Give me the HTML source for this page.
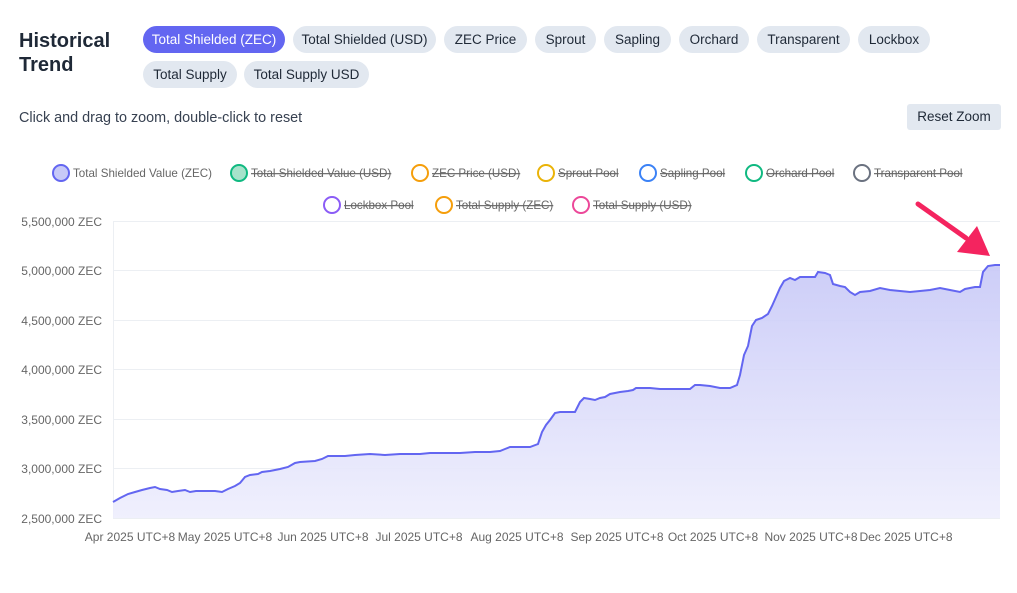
<!DOCTYPE html><html><head><style>
body{margin:0;width:1017px;height:593px;background:#fff;font-family:"Liberation Sans",sans-serif;position:relative;overflow:hidden;color:#1f2937}
.t{position:absolute;left:19px;top:29px;font-size:20px;font-weight:bold;line-height:24px;color:#1f2937}
.b{position:absolute;height:27px;line-height:27px;border-radius:14px;background:#e2e8f0;font-size:13.5px;text-align:center;color:#1f2937;white-space:nowrap}
.a{background:#6366f1;color:#fff}
.h{position:absolute;left:19px;top:110px;font-size:14.4px;color:#374151}
.r{position:absolute;left:907px;top:104px;width:94px;height:26px;line-height:26px;text-align:center;background:#e2e8f0;border-radius:3px;font-size:13.5px}
svg text{font-family:"Liberation Sans",sans-serif}
</style></head><body>
<div class="t">Historical<br>Trend</div>
<div class="b a" style="left:143px;top:26px;width:142px">Total Shielded (ZEC)</div>
<div class="b" style="left:293px;top:26px;width:143px">Total Shielded (USD)</div>
<div class="b" style="left:444px;top:26px;width:83px">ZEC Price</div>
<div class="b" style="left:535px;top:26px;width:61px">Sprout</div>
<div class="b" style="left:604px;top:26px;width:67px">Sapling</div>
<div class="b" style="left:679px;top:26px;width:70px">Orchard</div>
<div class="b" style="left:757px;top:26px;width:93px">Transparent</div>
<div class="b" style="left:858px;top:26px;width:72px">Lockbox</div>
<div class="b" style="left:143px;top:61px;width:94px">Total Supply</div>
<div class="b" style="left:244px;top:61px;width:125px">Total Supply USD</div>
<div class="h">Click and drag to zoom, double-click to reset</div>
<div class="r">Reset Zoom</div>
<svg width="1017" height="593" style="position:absolute;left:0;top:0">
<defs><linearGradient id="g" x1="0" y1="0" x2="0" y2="1"><stop offset="0" stop-color="#c7c8f7"/><stop offset="1" stop-color="#eeeefd"/></linearGradient></defs>
<g stroke="#eceff3" stroke-width="1">
<line x1="113" x2="1000" y1="221.5" y2="221.5"/><line x1="113" x2="1000" y1="270.5" y2="270.5"/><line x1="113" x2="1000" y1="320.5" y2="320.5"/><line x1="113" x2="1000" y1="369.5" y2="369.5"/><line x1="113" x2="1000" y1="419.5" y2="419.5"/><line x1="113" x2="1000" y1="468.5" y2="468.5"/><line x1="113" x2="1000" y1="518.5" y2="518.5"/>
<line x1="113.5" x2="113.5" y1="221" y2="518"/>
</g>
<g font-size="12" fill="#666" text-anchor="end">
<text x="102" y="226">5,500,000 ZEC</text><text x="102" y="275">5,000,000 ZEC</text><text x="102" y="325">4,500,000 ZEC</text><text x="102" y="374">4,000,000 ZEC</text><text x="102" y="424">3,500,000 ZEC</text><text x="102" y="473">3,000,000 ZEC</text><text x="102" y="523">2,500,000 ZEC</text>
</g>
<g font-size="12" fill="#666" text-anchor="middle">
<text x="130" y="541">Apr 2025 UTC+8</text><text x="225" y="541">May 2025 UTC+8</text><text x="323" y="541">Jun 2025 UTC+8</text><text x="419" y="541">Jul 2025 UTC+8</text><text x="517" y="541">Aug 2025 UTC+8</text><text x="617" y="541">Sep 2025 UTC+8</text><text x="713" y="541">Oct 2025 UTC+8</text><text x="811" y="541">Nov 2025 UTC+8</text><text x="906" y="541">Dec 2025 UTC+8</text>
</g>
<path d="M113,502 L120,498 128,494 135,492 142,490 150,488 155,487 160,489 167,490 172,492 178,491 185,490 190,492 196,491 205,491 215,491 222,492 228,489 235,486 240,483 245,477 250,475 258,474 262,472 270,471 280,469 288,467 295,463 300,462 315,461 322,459 328,456 335,456 345,456 355,455 370,454 385,455 400,454 420,454 430,453 445,453 460,453 475,452 490,452 500,451 505,449 510,447 520,447 530,447 538,444 542,432 546,425 550,420 555,413 560,412 570,412 575,412 580,402 584,398 590,399 595,400 600,398 605,397 610,394 620,392 628,391 633,390 636,388 650,388 660,389 670,389 680,389 690,389 695,385 700,385 710,386 720,388 730,388 737,385 740,375 744,355 748,346 752,326 756,320 762,318 768,314 772,306 776,297 780,288 784,281 790,278 795,280 800,277 808,277 815,277 818,272 825,273 830,275 833,284 840,286 845,287 850,292 855,295 860,292 870,291 880,288 890,290 900,291 910,292 920,291 930,290 940,288 950,290 960,292 965,289 975,287 980,287 983,272 988,266 995,265 1000,265 L1000,518 113,518Z" fill="url(#g)" opacity="0.9"/>
<path d="M113,502 L120,498 128,494 135,492 142,490 150,488 155,487 160,489 167,490 172,492 178,491 185,490 190,492 196,491 205,491 215,491 222,492 228,489 235,486 240,483 245,477 250,475 258,474 262,472 270,471 280,469 288,467 295,463 300,462 315,461 322,459 328,456 335,456 345,456 355,455 370,454 385,455 400,454 420,454 430,453 445,453 460,453 475,452 490,452 500,451 505,449 510,447 520,447 530,447 538,444 542,432 546,425 550,420 555,413 560,412 570,412 575,412 580,402 584,398 590,399 595,400 600,398 605,397 610,394 620,392 628,391 633,390 636,388 650,388 660,389 670,389 680,389 690,389 695,385 700,385 710,386 720,388 730,388 737,385 740,375 744,355 748,346 752,326 756,320 762,318 768,314 772,306 776,297 780,288 784,281 790,278 795,280 800,277 808,277 815,277 818,272 825,273 830,275 833,284 840,286 845,287 850,292 855,295 860,292 870,291 880,288 890,290 900,291 910,292 920,291 930,290 940,288 950,290 960,292 965,289 975,287 980,287 983,272 988,266 995,265 1000,265" fill="none" stroke="#6366f1" stroke-width="2"/>
<g font-size="11.6" fill="#666">
<circle cx="61" cy="173" r="8" fill="#c7c9f7" stroke="#6366f1" stroke-width="2"/><text x="73" y="177">Total Shielded Value (ZEC)</text>
<circle cx="239" cy="173" r="8" fill="#a7e3cb" stroke="#10b981" stroke-width="2"/><text x="251" y="177" text-decoration="line-through">Total Shielded Value (USD)</text>
<circle cx="420" cy="173" r="8" fill="none" stroke="#f59e0b" stroke-width="2"/><text x="432" y="177" text-decoration="line-through">ZEC Price (USD)</text>
<circle cx="546" cy="173" r="8" fill="none" stroke="#eab308" stroke-width="2"/><text x="558" y="177" text-decoration="line-through">Sprout Pool</text>
<circle cx="648" cy="173" r="8" fill="none" stroke="#3b82f6" stroke-width="2"/><text x="660" y="177" text-decoration="line-through">Sapling Pool</text>
<circle cx="754" cy="173" r="8" fill="none" stroke="#10b981" stroke-width="2"/><text x="766" y="177" text-decoration="line-through">Orchard Pool</text>
<circle cx="862" cy="173" r="8" fill="none" stroke="#6b7280" stroke-width="2"/><text x="874" y="177" text-decoration="line-through">Transparent Pool</text>
<circle cx="332" cy="205" r="8" fill="none" stroke="#8b5cf6" stroke-width="2"/><text x="344" y="209" text-decoration="line-through">Lockbox Pool</text>
<circle cx="444" cy="205" r="8" fill="none" stroke="#f59e0b" stroke-width="2"/><text x="456" y="209" text-decoration="line-through">Total Supply (ZEC)</text>
<circle cx="581" cy="205" r="8" fill="none" stroke="#ec4899" stroke-width="2"/><text x="593" y="209" text-decoration="line-through">Total Supply (USD)</text>
</g>
<line x1="918" y1="204" x2="966" y2="238" stroke="#f4245f" stroke-width="5" stroke-linecap="round"/>
<polygon points="990,256 957,252 977,226" fill="#f4245f"/>
</svg>
</body></html>
